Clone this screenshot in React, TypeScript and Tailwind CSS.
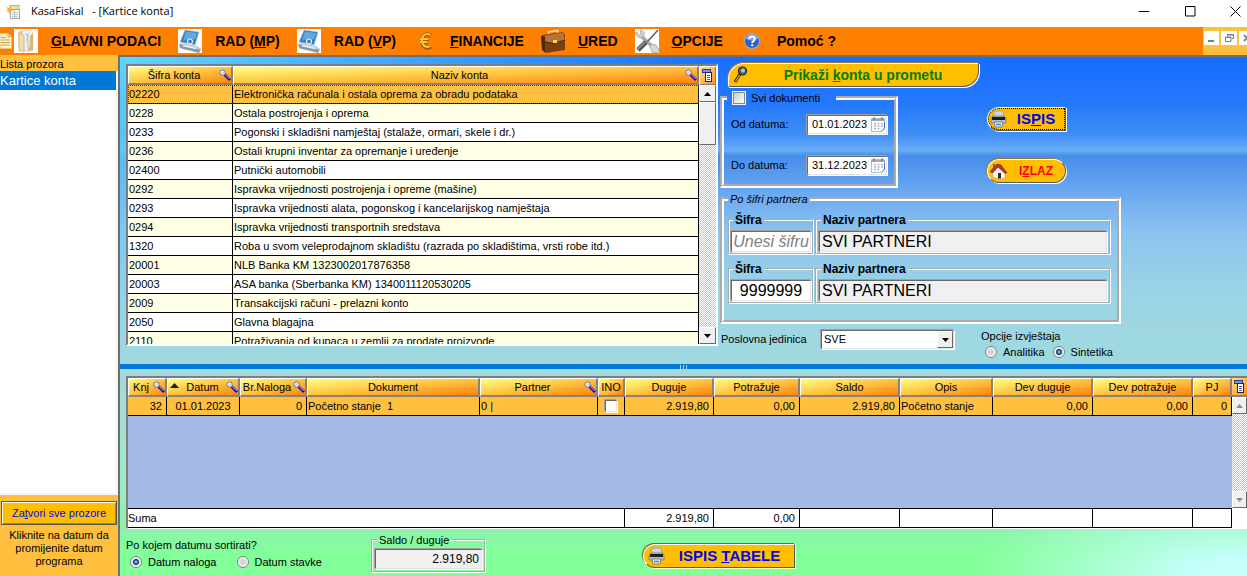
import { useState, type ReactNode } from "react";

const accounts = [
  { code: "02220", name: "Elektronička računala i ostala oprema za obradu podataka" },
  { code: "0228", name: "Ostala postrojenja i oprema" },
  { code: "0233", name: "Pogonski i skladišni namještaj (stalaže, ormari, skele i dr.)" },
  { code: "0236", name: "Ostali krupni inventar za opremanje i uređenje" },
  { code: "02400", name: "Putnički automobili" },
  { code: "0292", name: "Ispravka vrijednosti postrojenja i opreme (mašine)" },
  { code: "0293", name: "Ispravka vrijednosti alata, pogonskog i kancelarijskog namještaja" },
  { code: "0294", name: "Ispravka vrijednosti transportnih sredstava" },
  { code: "1320", name: "Roba u svom veleprodajnom skladištu (razrada po skladištima, vrsti robe itd.)" },
  { code: "20001", name: "NLB Banka KM 1323002017876358" },
  { code: "20003", name: "ASA banka (Sberbanka KM) 1340011120530205" },
  { code: "2009", name: "Transakcijski računi - prelazni konto" },
  { code: "2050", name: "Glavna blagajna" },
  { code: "2110", name: "Potraživanja od kupaca u zemlji za prodate proizvode" },
];

const columns = [
  { title: "Knj", width: "w-[39px]", value: "32", align: "text-right pr-1", search: true, sum: "" },
  { title: "Datum", width: "w-[73px]", value: "01.01.2023", align: "text-center", search: true, sort: true, sum: "" },
  { title: "Br.Naloga", width: "w-[67px]", value: "0", align: "text-right pr-1", search: true, sum: "" },
  { title: "Dokument", width: "", value: "Početno stanje  1", align: "text-left pl-px", sum: "" },
  { title: "Partner", width: "w-[118px]", value: "0 |", align: "text-left pl-px", search: true, sum: "" },
  { title: "INO", width: "w-[27px]", value: "check", align: "text-center", sum: "" },
  { title: "Duguje", width: "w-[89px]", value: "2.919,80", align: "text-right pr-1", sum: "2.919,80" },
  { title: "Potražuje", width: "w-[86px]", value: "0,00", align: "text-right pr-1", sum: "0,00" },
  { title: "Saldo", width: "w-[100px]", value: "2.919,80", align: "text-right pr-1", sum: "" },
  { title: "Opis", width: "w-[93px]", value: "Početno stanje", align: "text-left pl-px", sum: "" },
  { title: "Dev duguje", width: "w-[100px]", value: "0,00", align: "text-right pr-1", sum: "" },
  { title: "Dev potražuje", width: "w-[100px]", value: "0,00", align: "text-right pr-1", sum: "" },
  { title: "PJ", width: "w-[39px]", value: "0", align: "text-right pr-1", sum: "" },
];

const headCell =
  "h-[19px] border-t border-l border-r-2 border-b-2 border-t-white border-l-white border-r-[#8c8274] border-b-[#8c8274] bg-linear-to-br from-[#ffff80] via-[#ffc440] to-[#ff8000] p-0 font-normal";
const sunken = "border border-t-[#696969] border-l-[#696969] border-r-[#e3e3e3] border-b-[#e3e3e3] shadow-[-1px_-1px_0_#a0a0a0,1px_1px_0_#fff]";
const raised = "border border-t-white border-l-white border-r-[#696969] border-b-[#696969] bg-[#f0f0f0]";
const track = "bg-[repeating-conic-gradient(#fff_0_25%,#c8c8c8_0_50%)] bg-size-[2px_2px]";

function SearchIcon() {
  return (
    <svg width="12" height="12" viewBox="0 0 12 12" className="shrink-0" aria-hidden="true">
      <path d="M5.5 5.5l5.500 5.500" stroke="#0000c0" strokeWidth="2.6" />
      <path d="M6 5.400l4.600 4.600" stroke="#fff" strokeWidth="0.8" />
      <circle cx="3.6" cy="3.6" r="2.8" fill="#d8dce0" stroke="#77797c" />
      <path d="M2.2 3.6a1.5 1.5 0 0 1 1.5-1.5" stroke="#fff" fill="none" />
    </svg>
  );
}

function ColumnsIcon() {
  return (
    <svg width="11" height="13" viewBox="0 0 11 13" className="shrink-0" aria-hidden="true">
      <rect x="0.5" y="0.5" width="8" height="3" fill="#8090e0" stroke="#303c90" />
      <rect x="3.5" y="3.5" width="6" height="9" fill="#fff" stroke="#202060" />
      <path d="M5 6.5h3M5 8.5h3M5 10.5h3" stroke="#5058b0" />
    </svg>
  );
}

function Arrow({ up, muted }: { up?: boolean; muted?: boolean }) {
  return (
    <svg width="7" height="4" viewBox="0 0 7 4" aria-hidden="true">
      <path d={up ? "M0 4h7L3.5 0z" : "M0 0h7L3.5 4z"} fill={muted ? "#8c8c8c" : "#000"} />
    </svg>
  );
}

function DocIcon() {
  return (
    <svg width="12" height="16" viewBox="0 0 12 16" className="shrink-0" aria-hidden="true">
      <path d="M0 .5h8l3.5 3.5v11.500H0z" fill="#fff4cf" stroke="#e8c878" />
      <path d="M8 .5V4h3.500" fill="#f0d89a" stroke="#d8b060" />
      <path d="M1 4.500h5M1 7h9M1 9.500h9M1 12h9" stroke="#c9a050" />
    </svg>
  );
}

function AppIcon() {
  return (
    <svg width="14" height="14" viewBox="0 0 14 14" aria-hidden="true">
      <rect x="4" y="0.500" width="9" height="5" fill="#e9dfa6" stroke="#c9b46a" />
      <rect x="4.500" y="4.500" width="9" height="9" fill="#f8f6ee" stroke="#a0a8b0" />
      <path d="M6 7.500h6M6 9.500h6M6 11.500h6M8.500 5v8" stroke="#b8c0c8" strokeWidth="0.8" />
      <path d="M0 2l3 1 2-2 0 3 2.500 1.500-3 .8-.8 3-1.500-2.800L0 6l2-1.500z" fill="#f2b632" />
    </svg>
  );
}

function FolderIcon() {
  return (
    <svg width="24" height="24" viewBox="0 0 24 24" aria-hidden="true">
      <rect width="24" height="24" fill="#fff" />
      <path d="M4 3l5-2 1 20-5 2z" fill="#e6c98c" />
      <path d="M8 2l8-1 3 2v18l-9 1z" fill="#eef0f0" stroke="#cfd0cc" strokeWidth="0.7" />
      <path d="M11 5c3-1 3 4 1 7M14 4v16" stroke="#b8beba" fill="none" />
      <path d="M5 4l5 3v16l-5-2z" fill="#f2dfad" stroke="#cfae6c" strokeWidth="0.7" />
      <path d="M16 7l3-3v17l-6 2c3-4 3-9 3-16z" fill="#dbb873" />
    </svg>
  );
}

function TerminalIcon() {
  return (
    <svg width="24" height="24" viewBox="0 0 24 24" aria-hidden="true">
      <rect width="24" height="24" fill="#fff" />
      <path d="M7 1l14 2-4 13-15-3z" fill="#3a7cc0" stroke="#a8c8e4" strokeWidth="0.8" />
      <path d="M8 2.500l11 1.600-2 6.500C13 9 9 10 5 12z" fill="#63a8df" />
      <circle cx="12" cy="12.500" r="2.500" fill="none" stroke="#eaf2fa" strokeWidth="1.200" />
      <path d="M1 15l4-1 14 3 4 3-2 3-17-3z" fill="#c4ccd4" />
      <path d="M1 15l1 4 19 5 2-4-2 .5z" fill="#8f9aa5" />
      <path d="M5 16.500l13 3" stroke="#edf1f4" strokeWidth="1.500" />
    </svg>
  );
}

function EuroIcon() {
  return (
    <svg width="24" height="24" viewBox="0 0 24 24" aria-hidden="true">
      <path d="M18 6.500c-5-3-9 0-9 5.500s4 8.500 9 5.500M7 10.300h9M7 13.500h8" fill="none" stroke="#a85800" strokeWidth="3.800" />
      <path d="M17.500 6c-5-2.500-8.500.5-8.500 5.500s4 8 8.500 5.500M7 10h8.500M7 13h7.500" fill="none" stroke="#ffc23c" strokeWidth="2" />
    </svg>
  );
}

function BriefcaseIcon() {
  return (
    <svg width="24" height="24" viewBox="0 0 24 24" aria-hidden="true">
      <path d="M7.500 5.500V3l9-1.500.5 3" fill="none" stroke="#f0d8b0" strokeWidth="1.600" />
      <path d="M1 6l21-3 2 3v15L5 24l-4-3z" fill="#7a4012" />
      <path d="M4 6.500l18-3 2 8-10 3L2 12z" fill="#b87434" />
      <path d="M0 7l4 1v15.500l-3-3z" fill="#4c2408" />
      <path d="M4 13l9 1.500 11-3.500" stroke="#4c2408" fill="none" />
      <rect x="12" y="11" width="4" height="3" fill="#ffd257" />
    </svg>
  );
}

function ToolsIcon() {
  return (
    <svg width="24" height="24" viewBox="0 0 24 24" aria-hidden="true">
      <rect width="24" height="24" fill="#fff" />
      <path d="M5 6l13 12" stroke="#a9adb0" strokeWidth="3.600" />
      <path d="M0 4l2-1 2 3 2-1-1-4c4 0 5 3 4 6L6 9C3 9 1 7 0 4z" fill="#cfd2d4" stroke="#96999c" strokeWidth="0.600" />
      <path d="M16 15l5 1 3 5-2 3-5-1-2-5z" fill="#d6d8da" stroke="#909396" strokeWidth="0.700" />
      <path d="M23 1L12 13" stroke="#606366" strokeWidth="1.600" />
      <path d="M11 13L3 21" stroke="#4e5052" strokeWidth="4.600" />
      <path d="M10 13L3 20" stroke="#9a9da0" strokeWidth="1.400" />
    </svg>
  );
}

function HelpIcon() {
  return (
    <svg width="24" height="24" viewBox="0 0 24 24" aria-hidden="true">
      <circle cx="12" cy="12" r="7.500" fill="#2e62c4" stroke="#8fb4ee" />
      <path d="M5.500 9.500a7 7 0 0 1 13 0c-4 2-9 3-13 0z" fill="#7aa5ee" />
      <path d="M9.300 10c0-3.500 5.500-3.500 5.500 0 0 2-2.600 2-2.600 4M12.200 15.300v2" fill="none" stroke="#fff" strokeWidth="2" />
    </svg>
  );
}

function PrinterIcon() {
  return (
    <svg width="17" height="18" viewBox="0 0 17 18" className="shrink-0" aria-hidden="true">
      <path d="M4 1h9l1 6H3z" fill="#cdd6dd" stroke="#8c959c" strokeWidth="0.700" />
      <path d="M1 8l2-2h11l2 2v5H1z" fill="#b8bcc0" stroke="#6a6e72" strokeWidth="0.700" />
      <path d="M2 7h13v3H2z" fill="#1c1e20" />
      <path d="M4 12h9l-1 5H5z" fill="#dfe8f0" stroke="#5c6064" strokeWidth="0.700" />
      <path d="M6 14.500h5" stroke="#3f8fd0" strokeWidth="1.500" />
    </svg>
  );
}

function HomeIcon() {
  return (
    <svg width="17" height="17" viewBox="0 0 17 17" className="shrink-0" aria-hidden="true">
      <path d="M2 8l5-5 8 5v7l-5 1-7-2z" fill="#f8f6f2" stroke="#b0a8a0" strokeWidth="0.600" />
      <path d="M0 8.500l7-7.500 4 1 6 8h-2.500L8 4 2.500 10z" fill="#b03a26" stroke="#6e1c10" strokeWidth="0.600" />
      <rect x="3" y="1" width="2" height="4" fill="#b0452e" />
      <path d="M8 10h3v5.500H8z" fill="#3b2418" />
    </svg>
  );
}

function MagnifierIcon() {
  return (
    <svg width="15" height="18" viewBox="0 0 15 18" className="shrink-0" aria-hidden="true">
      <path d="M7 8l-5 8" stroke="#3a2a10" strokeWidth="3" />
      <path d="M6.500 9l-4 6.500" stroke="#d8a840" strokeWidth="1.200" />
      <circle cx="9.500" cy="5" r="4" fill="#59656e" stroke="#1e2226" strokeWidth="1.200" />
      <circle cx="10" cy="4.500" r="2" fill="#b4c2cc" />
    </svg>
  );
}

function CalendarIcon() {
  return (
    <svg width="15" height="16" viewBox="0 0 15 16" aria-hidden="true">
      <path d="M0.500 1.500h13v10l-3 3h-10z" fill="#fff" stroke="#a4bcd8" />
      <path d="M0 2h14v2H0z" fill="#a4a8ac" />
      <path d="M3 0v3M11 0v3" stroke="#60666c" />
      <path d="M3 6.500h2M6.500 6.500h2M10 6.500h2M3 9h2M6.500 9h2M10 9h2M3 11.500h2M6.500 11.500h2" stroke="#a4b4d0" strokeWidth="1.400" />
      <path d="M13.500 5v6l-3 3.500" fill="none" stroke="#3d74b8" />
    </svg>
  );
}

const menu = [
  { icon: <FolderIcon />, pre: "", key: "G", post: "LAVNI PODACI" },
  { icon: <TerminalIcon />, pre: "RAD (", key: "M", post: "P)" },
  { icon: <TerminalIcon />, pre: "RAD (", key: "V", post: "P)" },
  { icon: <EuroIcon />, pre: "", key: "F", post: "INANCIJE" },
  { icon: <BriefcaseIcon />, pre: "", key: "U", post: "RED" },
  { icon: <ToolsIcon />, pre: "", key: "O", post: "PCIJE" },
  { icon: <HelpIcon />, pre: "Pomoć ?", key: "", post: "" },
];

function Radio({ name, label, checked, onChange }: { name: string; label: string; checked: boolean; onChange: () => void }) {
  return (
    <label className="flex items-center gap-1.5">
      <input
        type="radio"
        name={name}
        checked={checked}
        onChange={onChange}
        className="size-3 appearance-none rounded-full border border-[#7c8288] bg-[radial-gradient(circle,#d4d4d4_30%,#f8f8f8_70%)] checked:bg-[radial-gradient(circle,#58b8e8_0_10%,#0c3560_35%,#f4f4f4_52%)]"
      />
      {label}
    </label>
  );
}

function DateField({ id, label, value }: { id: string; label: string; value: string }) {
  return (
    <div className="flex items-center">
      <label htmlFor={id} className="w-[76px]">{label}</label>
      <div className={`flex h-[19px] w-20 items-center bg-white ${sunken}`}>
        <input id={id} defaultValue={value} className="min-w-0 flex-1 pl-1 text-[11px] outline-none" />
        <button type="button" aria-label={`${label} kalendar`} className="shrink-0">
          <CalendarIcon />
        </button>
      </div>
    </div>
  );
}

function Group({ title, htmlFor, className, children }: { title: string; htmlFor: string; className: string; children: ReactNode }) {
  return (
    <fieldset className={`min-w-0 border-2 border-white [border-style:groove] ${className}`}>
      <legend className="ml-0.5 px-0.5 leading-[14px]">
        <label htmlFor={htmlFor}>{title}</label>
      </legend>
      {children}
    </fieldset>
  );
}

function PartnerRow({ id, code, placeholder }: { id: string; code: string; placeholder?: string }) {
  return (
    <div className="flex gap-px text-[12px] font-bold">
      <Group title="Šifra" htmlFor={`${id}-code`} className="h-[42px] w-[86px] px-px pt-1">
        <input
          id={`${id}-code`}
          defaultValue={code}
          placeholder={placeholder}
          className={`block h-[21px] w-full bg-white text-center text-[16px] font-normal outline-none placeholder:text-[#808080] placeholder:italic ${sunken}`}
        />
      </Group>
      <Group title="Naziv partnera" htmlFor={`${id}-name`} className="h-[42px] flex-1 px-0.5 pt-1">
        <input
          id={`${id}-name`}
          readOnly
          value="SVI PARTNERI"
          className={`block h-[21px] w-full bg-[#f0f0f0] pl-0.5 text-[16px] font-normal outline-none ${sunken}`}
        />
      </Group>
    </div>
  );
}

function AccountsTable() {
  const [selected, setSelected] = useState(0);
  return (
    <div className="flex h-[282px] min-w-0 flex-1 overflow-hidden border-2 border-t-[#7d7d7d] border-r-white border-b-white border-l-[#7d7d7d] bg-white">
      <div className="min-w-0 flex-1">
        <table className="w-full table-fixed border-separate border-spacing-0">
          <thead>
            <tr>
              <th className={`w-[105px] ${headCell}`}>
                <div className="flex items-center leading-4">
                  <span className="flex-1">Šifra konta</span>
                  <SearchIcon />
                </div>
              </th>
              <th className={headCell}>
                <div className="flex items-center leading-4">
                  <span className="flex-1">Naziv konta</span>
                  <SearchIcon />
                </div>
              </th>
            </tr>
          </thead>
          <tbody>
            {accounts.map((row, i) => (
              <tr
                key={row.code}
                onClick={() => setSelected(i)}
                className={
                  i === selected
                    ? "bg-[#ffc040] outline-1 -outline-offset-1 outline-dotted outline-[#0040c0]"
                    : i % 2
                      ? "bg-[#ffffe6]"
                      : "bg-white"
                }
              >
                <td className="h-[19px] border-r border-b border-black p-0 pl-px leading-[18px]">{row.code}</td>
                <td className="h-[19px] truncate border-r border-b border-black p-0 pl-px leading-[18px]">{row.name}</td>
              </tr>
            ))}
          </tbody>
        </table>
      </div>
      <div className={`flex w-[17px] shrink-0 flex-col ${track}`}>
        <button type="button" aria-label="Stupci" className="flex h-[19px] items-center justify-center border border-t-white border-r-[#8c8274] border-b-[#8c8274] border-l-white bg-linear-to-br from-[#ffe080] to-[#ff9010]">
          <ColumnsIcon />
        </button>
        <button type="button" aria-label="Gore" className={`flex h-[17px] items-center justify-center ${raised}`}>
          <Arrow up />
        </button>
        <div className={`h-[43px] ${raised}`} />
        <button type="button" aria-label="Dolje" className={`mt-auto flex h-[17px] items-center justify-center ${raised}`}>
          <Arrow />
        </button>
      </div>
    </div>
  );
}

function Filters() {
  const [report, setReport] = useState("Sintetika");
  return (
    <div className="w-[527px] shrink-0">
      <div className="flex">
        <div className="w-[260px]">
          <button
            type="button"
            className="ml-2 flex h-6 w-[251px] items-center rounded-tl-2xl rounded-br-2xl border border-white border-r-[#5a5a50] border-b-[#5a5a50] bg-[#ffbf00] pl-1 text-[14px] font-bold text-[#008000] shadow-[1px_1px_0_#fff,-1px_-1px_0_#8a7a50]"
          >
            <MagnifierIcon />
            <span className="flex-1 text-center">
              Prikaži <u>k</u>onta u prometu
            </span>
          </button>
          <fieldset className="mt-1 h-[97px] w-[178px] border-4 border-white pl-[7px] [border-style:groove]">
            <legend className="-ml-1 w-[109px] pl-1.5">
              <label className="flex items-center gap-1.5 leading-[14px]">
                <input
                  type="checkbox"
                  className="size-3 appearance-none border border-[#8a8a8a] bg-linear-to-br from-[#c8ccd0] to-white outline-1 outline-[#f4f4f4] checked:bg-[#2060c0]"
                />
                Svi dokumenti
              </label>
            </legend>
            <div className="flex flex-col gap-[22px] pt-2.5">
              <DateField id="from" label="Od datuma:" value="01.01.2023" />
              <DateField id="to" label="Do datuma:" value="31.12.2023" />
            </div>
          </fieldset>
        </div>
        <div className="flex flex-col gap-7 pt-11 pl-[7px] font-bold">
          <button
            type="button"
            className="flex h-6 w-[79px] items-center rounded-l-full border border-[#5a5a50] border-t-white border-l-white bg-[#ffbf00] pl-0.5 text-[15px] text-[#0000ff] shadow-[1px_1px_0_#fff] outline-1 -outline-offset-2 outline-dotted outline-black"
          >
            <PrinterIcon />
            <span className="flex-1 text-center">
              IS<u>P</u>IS
            </span>
          </button>
          <button
            type="button"
            className="flex h-6 w-[79px] items-center rounded-full border border-white border-r-[#5a5a50] border-b-[#5a5a50] bg-[#ffbf00] pl-0.5 text-[12px] text-[#ff0000] shadow-[1px_1px_0_#fff,-1px_-1px_0_#8a7a50]"
          >
            <HomeIcon />
            <span className="flex-1 text-center">
              I<u>Z</u>LAZ
            </span>
          </button>
        </div>
      </div>

      <fieldset className="mt-1 h-[132px] w-[401px] border-4 border-white px-1 [border-style:groove]">
        <legend className="px-0.5 leading-[14px] italic">Po šifri partnera</legend>
        <div className="flex flex-col gap-[7px] pt-[7px] pr-0.5">
          <PartnerRow id="first" code="" placeholder="Unesi šifru" />
          <PartnerRow id="second" code="9999999" />
        </div>
      </fieldset>

      <div className="flex items-start pt-1">
        <label htmlFor="unit" className="w-[101px] pt-1 pl-px leading-[14px]">
          Poslovna jedinica
        </label>
        <div className="relative mt-0.5 w-[133px]">
          <select id="unit" className={`block h-[19px] w-full appearance-none bg-white pl-0.5 text-[11px] outline-none ${sunken}`}>
            <option>SVE</option>
          </select>
          <span className={`pointer-events-none absolute top-px right-px flex h-[17px] w-4 items-center justify-center ${raised}`}>
            <Arrow />
          </span>
        </div>
        <div className="pl-[27px]">
          <p className="leading-[16px]">Opcije izvještaja</p>
          <div className="flex gap-2 pl-1 leading-[16px]">
            {["Analitika", "Sintetika"].map((item) => (
              <Radio key={item} name="report" label={item} checked={report === item} onChange={() => setReport(item)} />
            ))}
          </div>
        </div>
      </div>
    </div>
  );
}

function EntriesTable() {
  return (
    <div className="flex min-h-0 flex-1 border-t-2 border-b border-l-2 border-t-[#7d7d7d] border-b-white border-l-[#7d7d7d] bg-white">
      <table className="h-full min-w-0 flex-1 table-fixed border-separate border-spacing-0">
        <thead>
          <tr>
            {columns.map((col) => (
              <th key={col.title} className={`${col.width} ${headCell}`}>
                <div className="flex items-center leading-4 whitespace-nowrap">
                  {col.sort && (
                    <svg width="9" height="5" viewBox="0 0 9 5" className="mb-1 ml-0.5 shrink-0" aria-hidden="true">
                      <path d="M0 5h9L4.500 0z" fill="#202020" />
                    </svg>
                  )}
                  <span className="flex-1">{col.title}</span>
                  {col.search && <SearchIcon />}
                </div>
              </th>
            ))}
          </tr>
        </thead>
        <tbody>
          <tr className="bg-[#ffc040]">
            {columns.map((col) => (
              <td key={col.title} className={`h-[19px] border-r border-b border-black p-0 leading-[18px] whitespace-pre ${col.align}`}>
                {col.value === "check" ? (
                  <input type="checkbox" aria-label="INO" className={`mx-auto block size-3 appearance-none bg-white checked:bg-[#2060c0] ${sunken}`} />
                ) : (
                  col.value
                )}
              </td>
            ))}
          </tr>
          <tr>
            <td colSpan={13} className="border-b border-black bg-[#a4bbe8] p-0" />
          </tr>
        </tbody>
        <tfoot>
          <tr className="bg-white">
            <td colSpan={6} className="h-[19px] border-r border-b border-black p-0 leading-[18px]">
              Suma
            </td>
            {columns.slice(6).map((col) => (
              <td key={col.title} className={`h-[19px] border-r border-b border-black p-0 leading-[18px] ${col.align}`}>
                {col.sum}
              </td>
            ))}
          </tr>
        </tfoot>
      </table>
      <div className="flex w-[15px] shrink-0 flex-col">
        <button type="button" aria-label="Stupci" className="flex h-[19px] items-center justify-center border-b-2 border-[#8c8274] bg-linear-to-br from-[#ffe080] to-[#ff9010]">
          <ColumnsIcon />
        </button>
        <div className={`flex flex-1 flex-col justify-between ${track}`}>
          <button type="button" aria-label="Gore" className={`flex h-[17px] items-center justify-center ${raised}`}>
            <Arrow up muted />
          </button>
          <button type="button" aria-label="Dolje" className={`flex h-[17px] items-center justify-center ${raised}`}>
            <Arrow muted />
          </button>
        </div>
        <div className="h-5" />
      </div>
    </div>
  );
}

function Footer() {
  const [sortBy, setSortBy] = useState("Datum naloga");
  return (
    <div className="flex h-[47px] shrink-0 items-start">
      <div className="w-[245px] pt-2">
        <p className="leading-4">Po kojem datumu sortirati?</p>
        <div className="flex gap-5 pl-1 leading-[18px]">
          {["Datum naloga", "Datum stavke"].map((item) => (
            <Radio key={item} name="sort" label={item} checked={sortBy === item} onChange={() => setSortBy(item)} />
          ))}
        </div>
      </div>
      <Group title="Saldo / duguje" htmlFor="balance" className="mt-1 h-10 w-[115px] px-0.5 pt-0.5">
        <input
          id="balance"
          readOnly
          value="2.919,80"
          className={`block h-5 w-full bg-[#f0f0f0] pr-0.5 text-right text-[12px] outline-none ${sunken}`}
        />
      </Group>
      <button
        type="button"
        className="mt-[15px] ml-[157px] flex h-6 w-[152px] items-center rounded-l-full border border-white border-r-[#5a5a50] border-b-[#5a5a50] bg-[#ffbf00] pl-1 text-[15px] font-bold text-[#0000ff] shadow-[1px_1px_0_#e8ffd0,-1px_-1px_0_#6a6a50]"
      >
        <PrinterIcon />
        <span className="flex-1 text-center">
          ISPIS <u>T</u>ABELE
        </span>
      </button>
    </div>
  );
}

export default function App() {
  return (
    <div className="flex h-screen min-h-[540px] flex-col overflow-hidden bg-white font-['Liberation_Sans',Arial,sans-serif] text-[11px] text-black">
      <header className="flex h-[27px] shrink-0 items-center pb-1 pl-1.5 font-['Open_Sans',sans-serif]">
        <AppIcon />
        <h1 className="flex-1 pl-[11px] text-[11px] whitespace-pre">KasaFiskal   - [Kartice konta]</h1>
        <div className="flex">
          <button type="button" aria-label="Smanji" className="flex w-[46px] justify-center">
            <svg width="11" height="11" viewBox="0 0 11 11"><path d="M0 5.500h10" stroke="#000" /></svg>
          </button>
          <button type="button" aria-label="Povećaj" className="flex w-[46px] justify-center">
            <svg width="11" height="11" viewBox="0 0 11 11"><path d="M.5.500h9.500v9.500H.500z" fill="none" stroke="#000" /></svg>
          </button>
          <button type="button" aria-label="Zatvori" className="flex w-[34px] justify-center pl-2.5">
            <svg width="11" height="11" viewBox="0 0 11 11"><path d="M.5.500l10 10M10.500.500l-10 10" stroke="#000" /></svg>
          </button>
        </div>
      </header>

      <nav className="flex h-7 shrink-0 items-center bg-[#ff8000]">
        <DocIcon />
        <div className="flex flex-1 items-center gap-[17px] pl-0.5">
          {menu.map((item) => (
            <button key={item.pre + item.key + item.post} type="button" className="flex items-center gap-[13px] text-[14px] font-bold whitespace-nowrap">
              {item.icon}
              <span>
                {item.pre}
                <u>{item.key}</u>
                {item.post}
              </span>
            </button>
          ))}
        </div>
        <div className="flex h-full w-11 gap-0.5 overflow-hidden bg-[#ffc040] pt-1 pl-px">
          <button type="button" aria-label="Smanji prozor" className="flex h-[14px] w-[15px] shrink-0 items-center justify-center bg-white">
            <svg width="7" height="8" viewBox="0 0 7 8"><path d="M0 7h6" stroke="#708090" strokeWidth="2" /></svg>
          </button>
          <button type="button" aria-label="Vrati prozor" className="flex h-[14px] w-4 shrink-0 items-center justify-center bg-white">
            <svg width="9" height="8" viewBox="0 0 9 8"><path d="M2.500 2V.5h6v4H7M.5 3h5.500v4.500H.5z" fill="none" stroke="#708090" /><path d="M0 3.500h6M2 1h7" stroke="#708090" /></svg>
          </button>
          <button type="button" aria-label="Zatvori prozor" className="flex h-[14px] w-4 shrink-0 items-center justify-center bg-white">
            <svg width="8" height="8" viewBox="0 0 8 8"><path d="M1 1l6 6M7 1L1 7" stroke="#708090" strokeWidth="1.800" /></svg>
          </button>
        </div>
      </nav>

      <div className="flex min-h-0 flex-1">
        <aside className="flex w-[118px] shrink-0 flex-col bg-[#ffc040]">
          <h2 className="h-4 pt-0.5 leading-[14px]">Lista prozora</h2>
          <div className="flex-1 border-r-2 border-b-2 border-[#f4f4f4] bg-white">
            <a href="#kartice" className="block h-[19px] bg-[#0078d7] text-[13px] leading-[19px] text-white">
              Kartice konta
            </a>
          </div>
          <div className="px-px pt-1.5">
            <button type="button" className="h-6 w-full border border-[#5a5a50] bg-[#ffbf00] text-[#0000ff] shadow-[inset_1px_1px_0_#fff,inset_-1px_-1px_0_#a08030]">
              Za<u>t</u>vori sve prozore
            </button>
          </div>
          <p className="px-1.5 pt-1 pb-2 text-center leading-[13px]">Kliknite na datum da promijenite datum programa</p>
        </aside>

        <main className="flex min-w-0 flex-1 flex-col border-t-2 border-l-2 border-[#6e6e6e] bg-[radial-gradient(ellipse_280px_90px_at_100%_100%,#c4fffa_20%,#c4fffa00),radial-gradient(ellipse_620px_300px_at_0_0,#62d4ff,#62d4ff00),linear-gradient(#186cff_0,#2478fb_9%,#3f8ff5_15%,#68acf5_18%,#468ee8_19%,#6aa8f0_26%,#8cc4f0_34%,#9bd4e4_46%,#a0dade_60%,#a2e4d0_76%,#90f2b0_90%,#82ff98_96%)]">
          <section className="flex shrink-0 gap-0.5 pt-1.5 pb-1 pl-1.5">
            <div className="flex min-w-0 flex-1 items-start pt-px">
              <AccountsTable />
            </div>
            <Filters />
          </section>
          <div className="flex h-[5px] shrink-0 items-center justify-center gap-0.5 bg-[#0078d7]" role="separator">
            <i className="h-1 w-px bg-white/70" />
            <i className="h-1 w-px bg-white/70" />
            <i className="h-1 w-px bg-white/70" />
          </div>
          <section className="flex min-h-0 flex-1 flex-col pt-[7px] pl-1.5">
            <EntriesTable />
            <Footer />
          </section>
        </main>
      </div>
    </div>
  );
}
